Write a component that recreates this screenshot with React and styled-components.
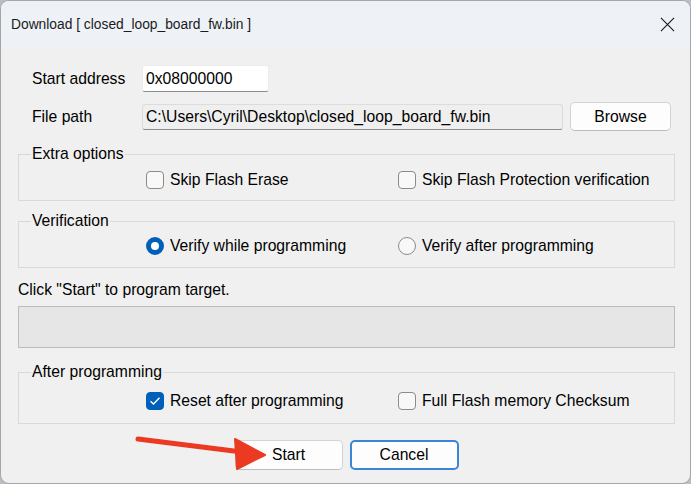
import React from "react";
import styled, { createGlobalStyle } from "styled-components";

const GlobalStyle = createGlobalStyle`
  html, body { margin: 0; padding: 0; }
  body {
    background: #b9bec6;
    width: 691px;
    height: 484px;
    overflow: hidden;
    font-family: "Liberation Sans", Arial, sans-serif;
  }
  * { box-sizing: border-box; }
`;

const Window = styled.div`
  position: relative;
  width: 691px;
  height: 484px;
  border: 1px solid #a3a6ab;
  border-radius: 9px;
  overflow: hidden;
  background: #f0f0f0;
  display: flex;
  flex-direction: column;
`;

const TitleBar = styled.div`
  height: 47px;
  flex: none;
  background: #eef2f7;
  display: flex;
  align-items: center;
  justify-content: space-between;
  padding: 0 15px 0 10px;
`;

const TitleText = styled.div`
  font-family: "Liberation Sans", sans-serif;
  font-size: 13.8px;
  color: #1b1b1b;
  margin-top: -1px;
`;

const CloseIcon = styled.svg`
  width: 15px;
  height: 15px;
  margin-top: -1px;
`;

const Body = styled.div`
  flex: 1;
  display: flex;
  flex-direction: column;
  padding: 17px 15px 0 17px;
  font-size: 15.7px;
  color: #000;
`;

const FieldRow = styled.div`
  display: flex;
  align-items: center;
  margin-top: ${(p) => p.$mt || 0}px;
`;

const FieldLabel = styled.div`
  width: 124px;
  padding-left: 14px;
  flex: none;
  line-height: 20px;
  white-space: nowrap;
`;

const TextInput = styled.div`
  width: ${(p) => p.$w}px;
  height: ${(p) => p.$h}px;
  background: ${(p) => (p.$readOnly ? "#efefef" : "#ffffff")};
  border: 1px solid ${(p) => (p.$readOnly ? "#dcdcdc" : "#ececec")};
  border-bottom: 1px solid #8c8c8c;
  border-radius: 3px;
  padding-left: 3px;
  display: flex;
  align-items: center;
  white-space: nowrap;
  overflow: hidden;
`;

const Button = styled.div`
  width: ${(p) => p.$w}px;
  height: ${(p) => p.$h}px;
  background: #fdfdfd;
  border: ${(p) => (p.$focused ? "2px solid #3a86d4" : "1px solid #d3d3d3")};
  border-bottom-color: ${(p) => (p.$focused ? "#3a86d4" : "#bcbcbc")};
  border-radius: 5px;
  display: flex;
  align-items: center;
  justify-content: center;
  margin-left: ${(p) => p.$ml || 0}px;
`;

const Group = styled.fieldset`
  margin: ${(p) => p.$mt}px 0 0 0;
  padding: ${(p) => p.$pt}px 0 ${(p) => p.$pb}px 0;
  border: 1px solid #d9d9d9;
  min-width: 0;
`;

const Legend = styled.legend`
  margin-left: 12px;
  padding: 0 1px;
  line-height: 18px;
`;

const OptionGrid = styled.div`
  display: grid;
  grid-template-columns: 252px auto;
  align-items: center;
  padding-left: 127px;
`;

const Option = styled.div`
  display: flex;
  align-items: center;
  gap: 6px;
  line-height: 20px;
  white-space: nowrap;
`;

const CheckBox = styled.span`
  width: 18px;
  height: 18px;
  flex: none;
  border-radius: 4px;
  border: 1px solid ${(p) => (p.$checked ? "#005fb8" : "#8b8b8b")};
  background: ${(p) => (p.$checked ? "#005fb8" : "#f8f8f8")};
  display: flex;
  align-items: center;
  justify-content: center;
`;

const Radio = styled.span`
  width: 18px;
  height: 18px;
  flex: none;
  border-radius: 50%;
  border: ${(p) => (p.$checked ? "5px solid #005fb8" : "1px solid #8b8b8b")};
  background: ${(p) => (p.$checked ? "#ffffff" : "#f8f8f8")};
`;

const StatusText = styled.div`
  margin-top: 13px;
  line-height: 18px;
`;

const ProgressBar = styled.div`
  margin-top: 7px;
  height: 42px;
  background: #e6e6e6;
  border: 1px solid #bcbcbc;
`;

const ButtonRow = styled.div`
  display: flex;
  justify-content: center;
  margin-top: 16px;
`;

const Arrow = styled.svg`
  position: absolute;
  left: 0;
  top: 0;
  width: 691px;
  height: 484px;
  pointer-events: none;
`;

function Check({ checked, children }) {
  return (
    <Option>
      <CheckBox $checked={checked}>
        {checked && (
          <svg width="12" height="10" viewBox="0 0 12 10">
            <path d="M1.5 5.2 L4.5 8 L10.5 1.8" fill="none" stroke="#fff" strokeWidth="1.4" />
          </svg>
        )}
      </CheckBox>
      {children}
    </Option>
  );
}

function RadioOption({ checked, children }) {
  return (
    <Option>
      <Radio $checked={checked} />
      {children}
    </Option>
  );
}

export default function App() {
  return (
    <>
      <GlobalStyle />
      <Window>
        <TitleBar>
          <TitleText>Download [ closed_loop_board_fw.bin ]</TitleText>
          <CloseIcon viewBox="0 0 16 16">
            <path d="M1 1 L15 15 M15 1 L1 15" stroke="#1b1b1b" strokeWidth="1.2" />
          </CloseIcon>
        </TitleBar>
        <Body>
          <FieldRow>
            <FieldLabel>Start address</FieldLabel>
            <TextInput $w={127} $h={27}>0x08000000</TextInput>
          </FieldRow>
          <FieldRow $mt={10}>
            <FieldLabel>File path</FieldLabel>
            <TextInput $w={421} $h={26} $readOnly>
              C:\Users\Cyril\Desktop\closed_loop_board_fw.bin
            </TextInput>
            <Button $w={101} $h={29} $ml={7}>Browse</Button>
          </FieldRow>
          <Group $mt={14} $pt={7} $pb={10}>
            <Legend>Extra options</Legend>
            <OptionGrid>
              <Check>Skip Flash Erase</Check>
              <Check>Skip Flash Protection verification</Check>
            </OptionGrid>
          </Group>
          <Group $mt={11} $pt={6} $pb={11}>
            <Legend>Verification</Legend>
            <OptionGrid>
              <RadioOption checked>Verify while programming</RadioOption>
              <RadioOption>Verify after programming</RadioOption>
            </OptionGrid>
          </Group>
          <StatusText>Click "Start" to program target.</StatusText>
          <ProgressBar />
          <Group $mt={15} $pt={10} $pb={12}>
            <Legend>After programming</Legend>
            <OptionGrid>
              <Check checked>Reset after programming</Check>
              <Check>Full Flash memory Checksum</Check>
            </OptionGrid>
          </Group>
          <ButtonRow>
            <Button $w={108} $h={30}>Start</Button>
            <Button $w={109} $h={30} $ml={7} $focused>Cancel</Button>
          </ButtonRow>
        </Body>
        <Arrow viewBox="0 0 691 484">
          <path d="M137 438 L241 451" stroke="#ec3a22" strokeWidth="5" strokeLinecap="round" />
          <path d="M234 438 L264 454 L236 468 Z" fill="#ec3a22" stroke="#ec3a22" strokeWidth="2" strokeLinejoin="round" />
        </Arrow>
      </Window>
    </>
  );
}
